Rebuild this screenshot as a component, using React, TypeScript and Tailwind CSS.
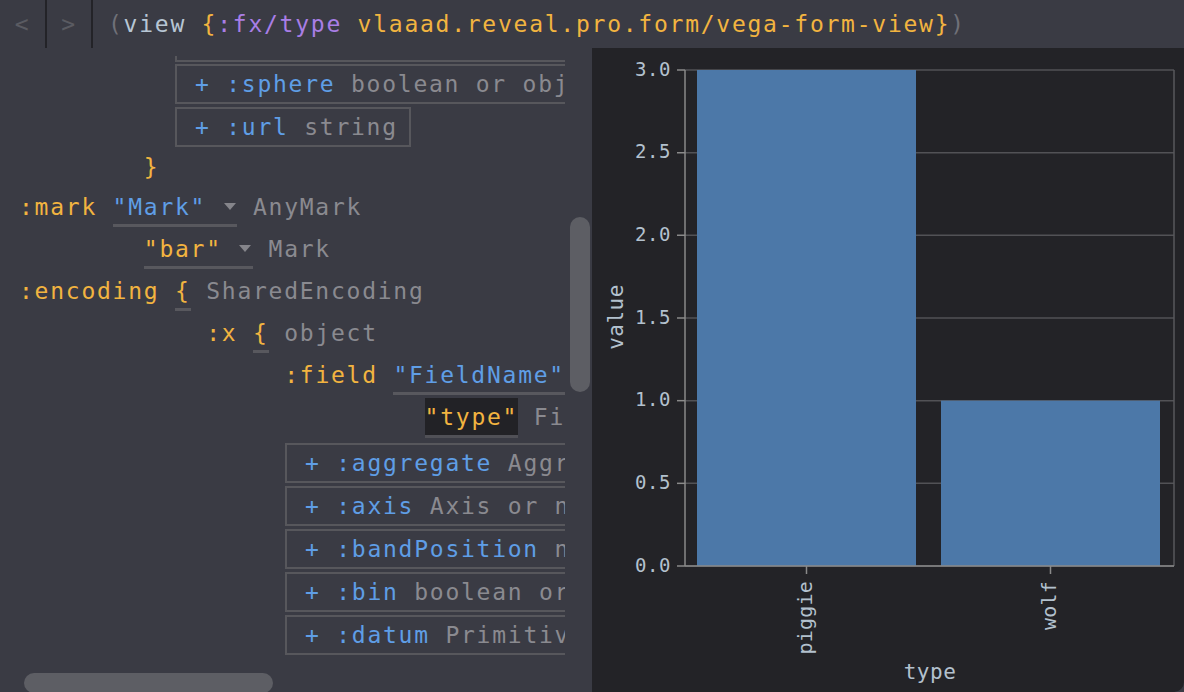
import clsx from "clsx";

const MONO = "font-['DejaVu_Sans_Mono',monospace] text-[23px] tracking-[1.75px] leading-[26px]";

const Y_TICKS = [0, 0.5, 1, 1.5, 2, 2.5, 3];
const PLOT = { left: 93, right: 582, top: 22, bottom: 518 };

function yScale(v: number) {
  return PLOT.bottom - (v / 3) * (PLOT.bottom - PLOT.top);
}

function Caret() {
  return (
    <span className="flex w-[15.6px] items-center justify-center">
      <svg width="12" height="8" viewBox="0 0 12 8">
        <polygon points="0,0 12,0 6,7" fill="#85858b" />
      </svg>
    </span>
  );
}

function FieldBox({ name, type, className }: { name: string; type: string; className?: string }) {
  return (
    <div
      className={clsx(
        "flex h-[40px] shrink-0 items-center self-start whitespace-pre border-2 border-[#57575c] pl-[18px] pr-[11px]",
        className,
      )}
    >
      <span className="text-[#5f9ee6]">+ :{name}</span>
      <span className="text-[#8a8a90]"> {type}</span>
    </div>
  );
}

function Chart() {
  const label = "fill-[#b3c1ce]";
  return (
    <svg
      viewBox="0 0 592 644"
      width={592}
      height={644}
      className="block"
      fontFamily="'DejaVu Sans Mono', monospace"
    >
      {Y_TICKS.map((t) => (
        <line
          key={t}
          x1={PLOT.left}
          x2={PLOT.right}
          y1={yScale(t)}
          y2={yScale(t)}
          stroke="#525256"
          strokeWidth={1.5}
        />
      ))}
      <line x1={PLOT.right} x2={PLOT.right} y1={PLOT.top} y2={PLOT.bottom} stroke="#58585c" strokeWidth={1.5} />

      <rect x={105} y={yScale(3)} width={219} height={PLOT.bottom - yScale(3)} fill="#4c78a8" />
      <rect x={349} y={yScale(1)} width={219} height={PLOT.bottom - yScale(1)} fill="#4c78a8" />

      <line x1={PLOT.left} x2={PLOT.left} y1={PLOT.top} y2={PLOT.bottom} stroke="#8a8a8a" strokeWidth={1.5} />
      <line x1={PLOT.left} x2={PLOT.right} y1={PLOT.bottom} y2={PLOT.bottom} stroke="#8a8a8a" strokeWidth={1.5} />

      {Y_TICKS.map((t) => (
        <g key={t}>
          <line x1={85} x2={PLOT.left} y1={yScale(t)} y2={yScale(t)} stroke="#8a8a8a" strokeWidth={1.5} />
          <text
            x={79}
            y={yScale(t)}
            textAnchor="end"
            dominantBaseline="middle"
            fontSize={19}
            letterSpacing={0.6}
            className={label}
          >
            {t.toFixed(1)}
          </text>
        </g>
      ))}

      {[
        { x: 214.5, name: "piggie" },
        { x: 458.5, name: "wolf" },
      ].map((b) => (
        <g key={b.name}>
          <line x1={b.x} x2={b.x} y1={PLOT.bottom} y2={526} stroke="#8a8a8a" strokeWidth={1.5} />
          <text
            x={b.x}
            y={533}
            transform={`rotate(-90 ${b.x} 533)`}
            textAnchor="end"
            dominantBaseline="middle"
            fontSize={20}
            letterSpacing={0.2}
            className={label}
          >
            {b.name}
          </text>
        </g>
      ))}

      <text
        x={25}
        y={269}
        transform="rotate(-90 25 269)"
        textAnchor="middle"
        dominantBaseline="middle"
        fontSize={21}
        letterSpacing={0.5}
        className={label}
      >
        value
      </text>
      <text
        x={338}
        y={625}
        textAnchor="middle"
        dominantBaseline="middle"
        fontSize={21}
        letterSpacing={0.5}
        className={label}
      >
        type
      </text>
    </svg>
  );
}

export default function App() {
  return (
    <div className={clsx("flex h-[692px] w-[1184px] flex-col overflow-hidden bg-[#3a3b44]", MONO)}>
      {/* toolbar */}
      <div className="flex h-[48px] shrink-0 items-stretch">
        <div className="flex w-[45px] items-center justify-center text-[#5a5b62]">&lt;</div>
        <div className="w-[2px] bg-[#232328]" />
        <div className="flex w-[44px] items-center justify-center text-[#5a5b62]">&gt;</div>
        <div className="w-[2px] bg-[#232328]" />
        <div className="flex items-center whitespace-pre pl-[15px]">
          <span className="text-[#6f7078]">(</span>
          <span className="text-[#b7c6d4]">view </span>
          <span className="text-[#f2b440]">{"{"}</span>
          <span className="text-[#a97ee6]">:fx/type</span>
          <span className="text-[#f2b440]"> vlaaad.reveal.pro.form/vega-form-view{"}"}</span>
          <span className="text-[#6f7078]">)</span>
        </div>
      </div>

      <div className="flex min-h-0 flex-1">
        {/* form editor */}
        <div className="relative w-[565px] shrink-0 overflow-hidden">
          <div className="mt-[8px] flex h-[615px] flex-col overflow-hidden">
            <FieldBox name="scale" type="number or signal reference" className="-mt-[34px] ml-[175px]" />
            <FieldBox name="sphere" type="boolean or object" className="mt-[2px] ml-[175px]" />
            <FieldBox name="url" type="string" className="mt-[3px] ml-[175px]" />

            <div className="flex h-[39px] shrink-0 items-center whitespace-pre pl-[143.8px] text-[#f2b440]">{"}"}</div>

            <div className="flex h-[42px] shrink-0 items-stretch whitespace-pre pl-[19px]">
              <span className="flex items-center text-[#f2b440]">:mark </span>
              <span className="mb-px flex items-center border-b-[3px] border-[#58585e] pt-[3px]">
                <span className="text-[#5f9ee6]">"Mark" </span>
                <Caret />
              </span>
              <span className="flex items-center text-[#8a8a90]"> AnyMark</span>
            </div>

            <div className="flex h-[42px] shrink-0 items-stretch whitespace-pre pl-[143.8px]">
              <span className="mb-px flex items-center border-b-[3px] border-[#58585e] pt-[3px]">
                <span className="text-[#f2b440]">"bar" </span>
                <Caret />
              </span>
              <span className="flex items-center text-[#8a8a90]"> Mark</span>
            </div>

            <div className="flex h-[42px] shrink-0 items-stretch whitespace-pre pl-[19px]">
              <span className="flex items-center text-[#f2b440]">:encoding </span>
              <span className="mb-px flex items-center border-b-[3px] border-[#58585e] pt-[3px] text-[#f2b440]">
                {"{"}
              </span>
              <span className="flex items-center text-[#8a8a90]"> SharedEncoding</span>
            </div>

            <div className="flex h-[42px] shrink-0 items-stretch whitespace-pre pl-[206.2px]">
              <span className="flex items-center text-[#f2b440]">:x </span>
              <span className="mb-px flex items-center border-b-[3px] border-[#58585e] pt-[3px] text-[#f2b440]">
                {"{"}
              </span>
              <span className="flex items-center text-[#8a8a90]"> object</span>
            </div>

            <div className="flex h-[42px] shrink-0 items-stretch whitespace-pre pl-[284.2px]">
              <span className="flex items-center text-[#f2b440]">:field </span>
              <span className="mb-px flex items-center border-b-[3px] border-[#58585e] pt-[3px] text-[#5f9ee6]">
                "FieldName"
              </span>
            </div>

            <div className="flex h-[42px] shrink-0 items-stretch whitespace-pre pl-[424.6px]">
              <span className="mt-[2px] flex items-center border-b-[3px] border-[#505056] bg-[#222226] text-[#f2b440]">
                "type"
              </span>
              <span className="flex items-center text-[#8a8a90]"> FieldName</span>
            </div>

            <FieldBox name="aggregate" type="Aggregate" className="mt-[5px] ml-[285px]" />
            <FieldBox name="axis" type="Axis or null" className="mt-[3px] ml-[285px]" />
            <FieldBox name="bandPosition" type="number" className="mt-[3px] ml-[285px]" />
            <FieldBox name="bin" type="boolean or BinParams or null" className="mt-[3px] ml-[285px]" />
            <FieldBox name="datum" type="PrimitiveValue or DateTime" className="mt-[3px] ml-[285px]" />
          </div>

          <div className="absolute left-[24px] top-[625px] h-[20px] w-[249px] rounded-full bg-[#5d5e64]" />
        </div>

        {/* vertical scrollbar */}
        <div className="w-[27px] shrink-0 pt-[169px]">
          <div className="ml-[5px] h-[175px] w-[20px] rounded-full bg-[#5d5e64]" />
        </div>

        {/* vega view */}
        <div className="h-[644px] w-[592px] shrink-0 overflow-hidden rounded-br-[10px] bg-[#232327]">
          <Chart />
        </div>
      </div>
    </div>
  );
}
